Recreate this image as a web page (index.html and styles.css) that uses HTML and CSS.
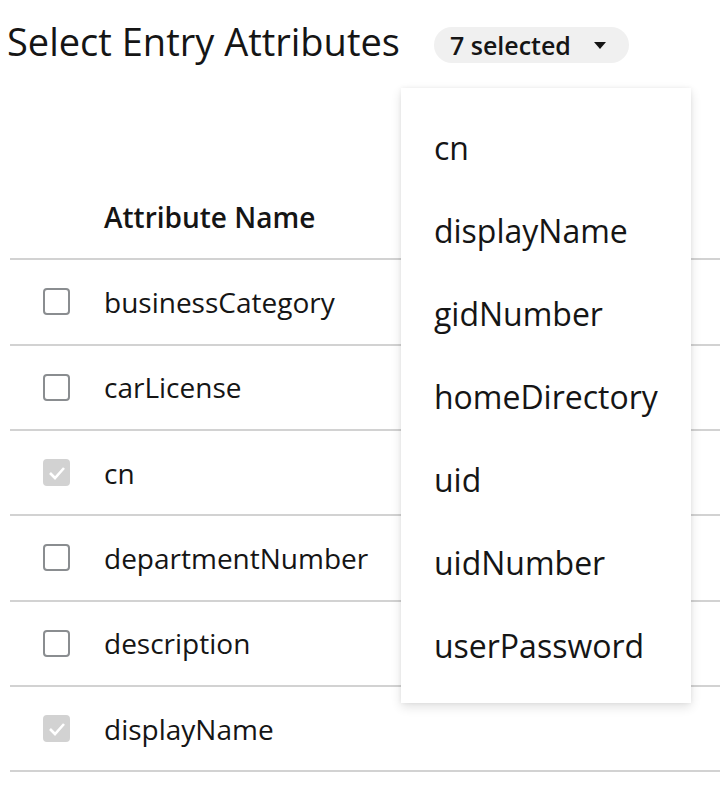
FILE: index.html
```html
<!DOCTYPE html>
<html>
<head>
    <meta charset="UTF-8">
    <meta name="viewport" content="width=device-width, initial-scale=1.0">
    <title>Select Entry Attributes</title>
    <link rel="stylesheet" href="styles.css">
</head>
<body>
    <div class="page">
        <div class="title-bar">
            <h1 class="title">Select Entry Attributes</h1>
            <div class="select-wrap">
                <button class="select-toggle">
                    <span>7 selected</span>
                    <svg class="caret" width="12" height="7" viewBox="0 0 12 7"><path d="M0 0 L12 0 L6 7 Z" fill="#151515"/></svg>
                </button>
                <ul class="select-menu">
                    <li>cn</li>
                    <li>displayName</li>
                    <li>gidNumber</li>
                    <li>homeDirectory</li>
                    <li>uid</li>
                    <li>uidNumber</li>
                    <li>userPassword</li>
                </ul>
            </div>
        </div>

        <div class="attr-table">
            <div class="row head">
                <div class="check-cell"></div>
                <div class="name-cell">Attribute Name</div>
            </div>
            <div class="row">
                <div class="check-cell"><span class="box"></span></div>
                <div class="name-cell">businessCategory</div>
            </div>
            <div class="row">
                <div class="check-cell"><span class="box"></span></div>
                <div class="name-cell">carLicense</div>
            </div>
            <div class="row">
                <div class="check-cell"><span class="box checked"><svg width="18" height="14" viewBox="0 0 18 14"><path d="M2 7 L7 12 L16 2" fill="none" stroke="#fff" stroke-width="2.6"/></svg></span></div>
                <div class="name-cell">cn</div>
            </div>
            <div class="row">
                <div class="check-cell"><span class="box"></span></div>
                <div class="name-cell">departmentNumber</div>
            </div>
            <div class="row">
                <div class="check-cell"><span class="box"></span></div>
                <div class="name-cell">description</div>
            </div>
            <div class="row">
                <div class="check-cell"><span class="box checked"><svg width="18" height="14" viewBox="0 0 18 14"><path d="M2 7 L7 12 L16 2" fill="none" stroke="#fff" stroke-width="2.6"/></svg></span></div>
                <div class="name-cell">displayName</div>
            </div>
        </div>
    </div>
</body>
</html>
```

FILE: styles.css
```css
body {
    margin: 0;
    font-family: "Open Sans", sans-serif;
    color: #151515;
    background-color: #fff;
}

.page {
    padding-left: 10px;
}

.title-bar {
    display: flex;
    align-items: center;
    height: 90px;
}

.title {
    margin: 0 34px 0 -3px;
    font-size: 38px;
    font-weight: 400;
    line-height: 1;
    position: relative;
    top: -4px;
}

.select-wrap {
    position: relative;
}

.select-toggle {
    display: flex;
    align-items: center;
    gap: 23px;
    height: 36px;
    padding: 0 23px 0 16px;
    border: none;
    border-radius: 18px;
    background-color: #f0f0f0;
    font-family: "Open Sans", sans-serif;
    font-size: 25px;
    font-weight: 600;
    color: #151515;
}

.select-menu {
    position: absolute;
    top: 61px;
    left: -33px;
    width: 290px;
    margin: 0;
    padding: 18px 0 16px;
    list-style: none;
    background-color: #fff;
    box-shadow: 0 4px 10px rgba(0, 0, 0, 0.12), 0 0 4px rgba(0, 0, 0, 0.06);
    z-index: 2;
}

.select-menu li {
    height: 83px;
    line-height: 83px;
    padding-left: 33px;
    font-size: 32px;
    white-space: nowrap;
}

.attr-table {
    margin-top: 85px;
}

.row {
    display: flex;
    align-items: center;
    height: 85.33px;
    box-sizing: border-box;
    border-bottom: 2px solid #d2d2d2;
    font-size: 28px;
}

.row.head {
    font-weight: 600;
    font-size: 28px;
}

.check-cell {
    width: 94px;
    display: flex;
    padding-left: 33px;
    box-sizing: border-box;
}

.box {
    display: flex;
    align-items: center;
    justify-content: center;
    width: 27px;
    height: 27px;
    box-sizing: border-box;
    border: 2px solid #8a8d90;
    border-radius: 4px;
}

.box.checked {
    border-color: #d2d2d2;
    background-color: #d2d2d2;
}
```
